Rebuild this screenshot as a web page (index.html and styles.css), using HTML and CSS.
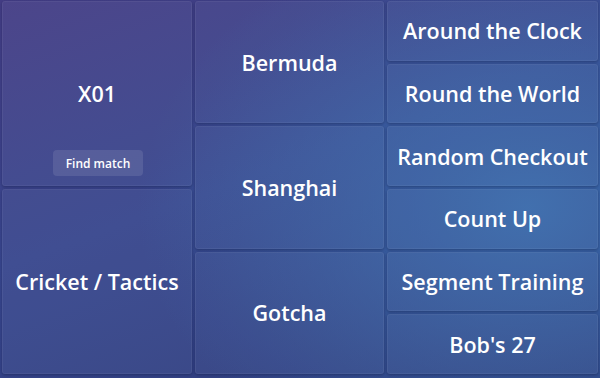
FILE: index.html
```html
<!DOCTYPE html>
<html lang="en">
<head>
    <meta charset="UTF-8">
    <meta name="viewport" content="width=device-width, initial-scale=1.0">
    <title>Game Modes</title>
    <link rel="stylesheet" href="styles.css">
</head>
<body>
    <main class="modes">
        <a href="#" class="mode mode-x01">
            <span>X01</span>
            <button class="find-match">Find match</button>
        </a>
        <a href="#" class="mode mode-tall">Cricket / Tactics</a>
        <a href="#" class="mode mode-mid mode-c2r1">Bermuda</a>
        <a href="#" class="mode mode-mid mode-c2r2">Shanghai</a>
        <a href="#" class="mode mode-mid mode-c2r3">Gotcha</a>
        <a href="#" class="mode mode-small">Around the Clock</a>
        <a href="#" class="mode mode-small">Round the World</a>
        <a href="#" class="mode mode-small">Random Checkout</a>
        <a href="#" class="mode mode-small">Count Up</a>
        <a href="#" class="mode mode-small">Segment Training</a>
        <a href="#" class="mode mode-small">Bob's 27</a>
    </main>
</body>
</html>
```

FILE: styles.css
```css
html, body {
    margin: 0;
    height: 100%;
}

body {
    font-family: 'Open Sans', 'Noto Sans', sans-serif;
    color: #fff;
    background:
        radial-gradient(ellipse 65% 75% at 88% 55%, rgba(58, 110, 175, 0.9), rgba(58, 110, 175, 0) 100%),
        linear-gradient(160deg, #443d85 0%, #38478e 45%, #2e3c7b 100%);
    overflow: hidden;
}

.modes {
    box-sizing: border-box;
    height: 100vh;
    padding: 1px 2px 4px;
    display: grid;
    grid-template-columns: 190px 189px 1fr;
    grid-template-rows: repeat(6, 1fr);
    grid-auto-flow: column;
    gap: 3px;
}

.mode {
    display: flex;
    align-items: center;
    justify-content: center;
    text-align: center;
    color: #fff;
    text-decoration: none;
    font-size: 21.5px;
    font-weight: 600;
    background: rgba(255, 255, 255, 0.045);
    border: 1px solid rgba(255, 255, 255, 0.05);
    border-radius: 3px;
    box-shadow: 0 1px 3px rgba(10, 15, 50, 0.35);
}

.mode:hover {
    background: rgba(255, 255, 255, 0.09);
}

.mode-x01 {
    grid-column: 1;
    grid-row: 1 / span 3;
    position: relative;
}

.mode-tall {
    grid-column: 1;
    grid-row: 4 / span 3;
}

.mode-c2r1 { grid-column: 2; grid-row: 1 / span 2; }
.mode-c2r2 { grid-column: 2; grid-row: 3 / span 2; }
.mode-c2r3 { grid-column: 2; grid-row: 5 / span 2; }

.mode-small {
    grid-column: 3;
}

.find-match {
    position: absolute;
    left: 50px;
    bottom: 9px;
    width: 90px;
    height: 26px;
    border: none;
    border-radius: 4px;
    background: rgba(255, 255, 255, 0.1);
    color: #fff;
    font-family: inherit;
    font-size: 12px;
    font-weight: 600;
    cursor: pointer;
}
```
